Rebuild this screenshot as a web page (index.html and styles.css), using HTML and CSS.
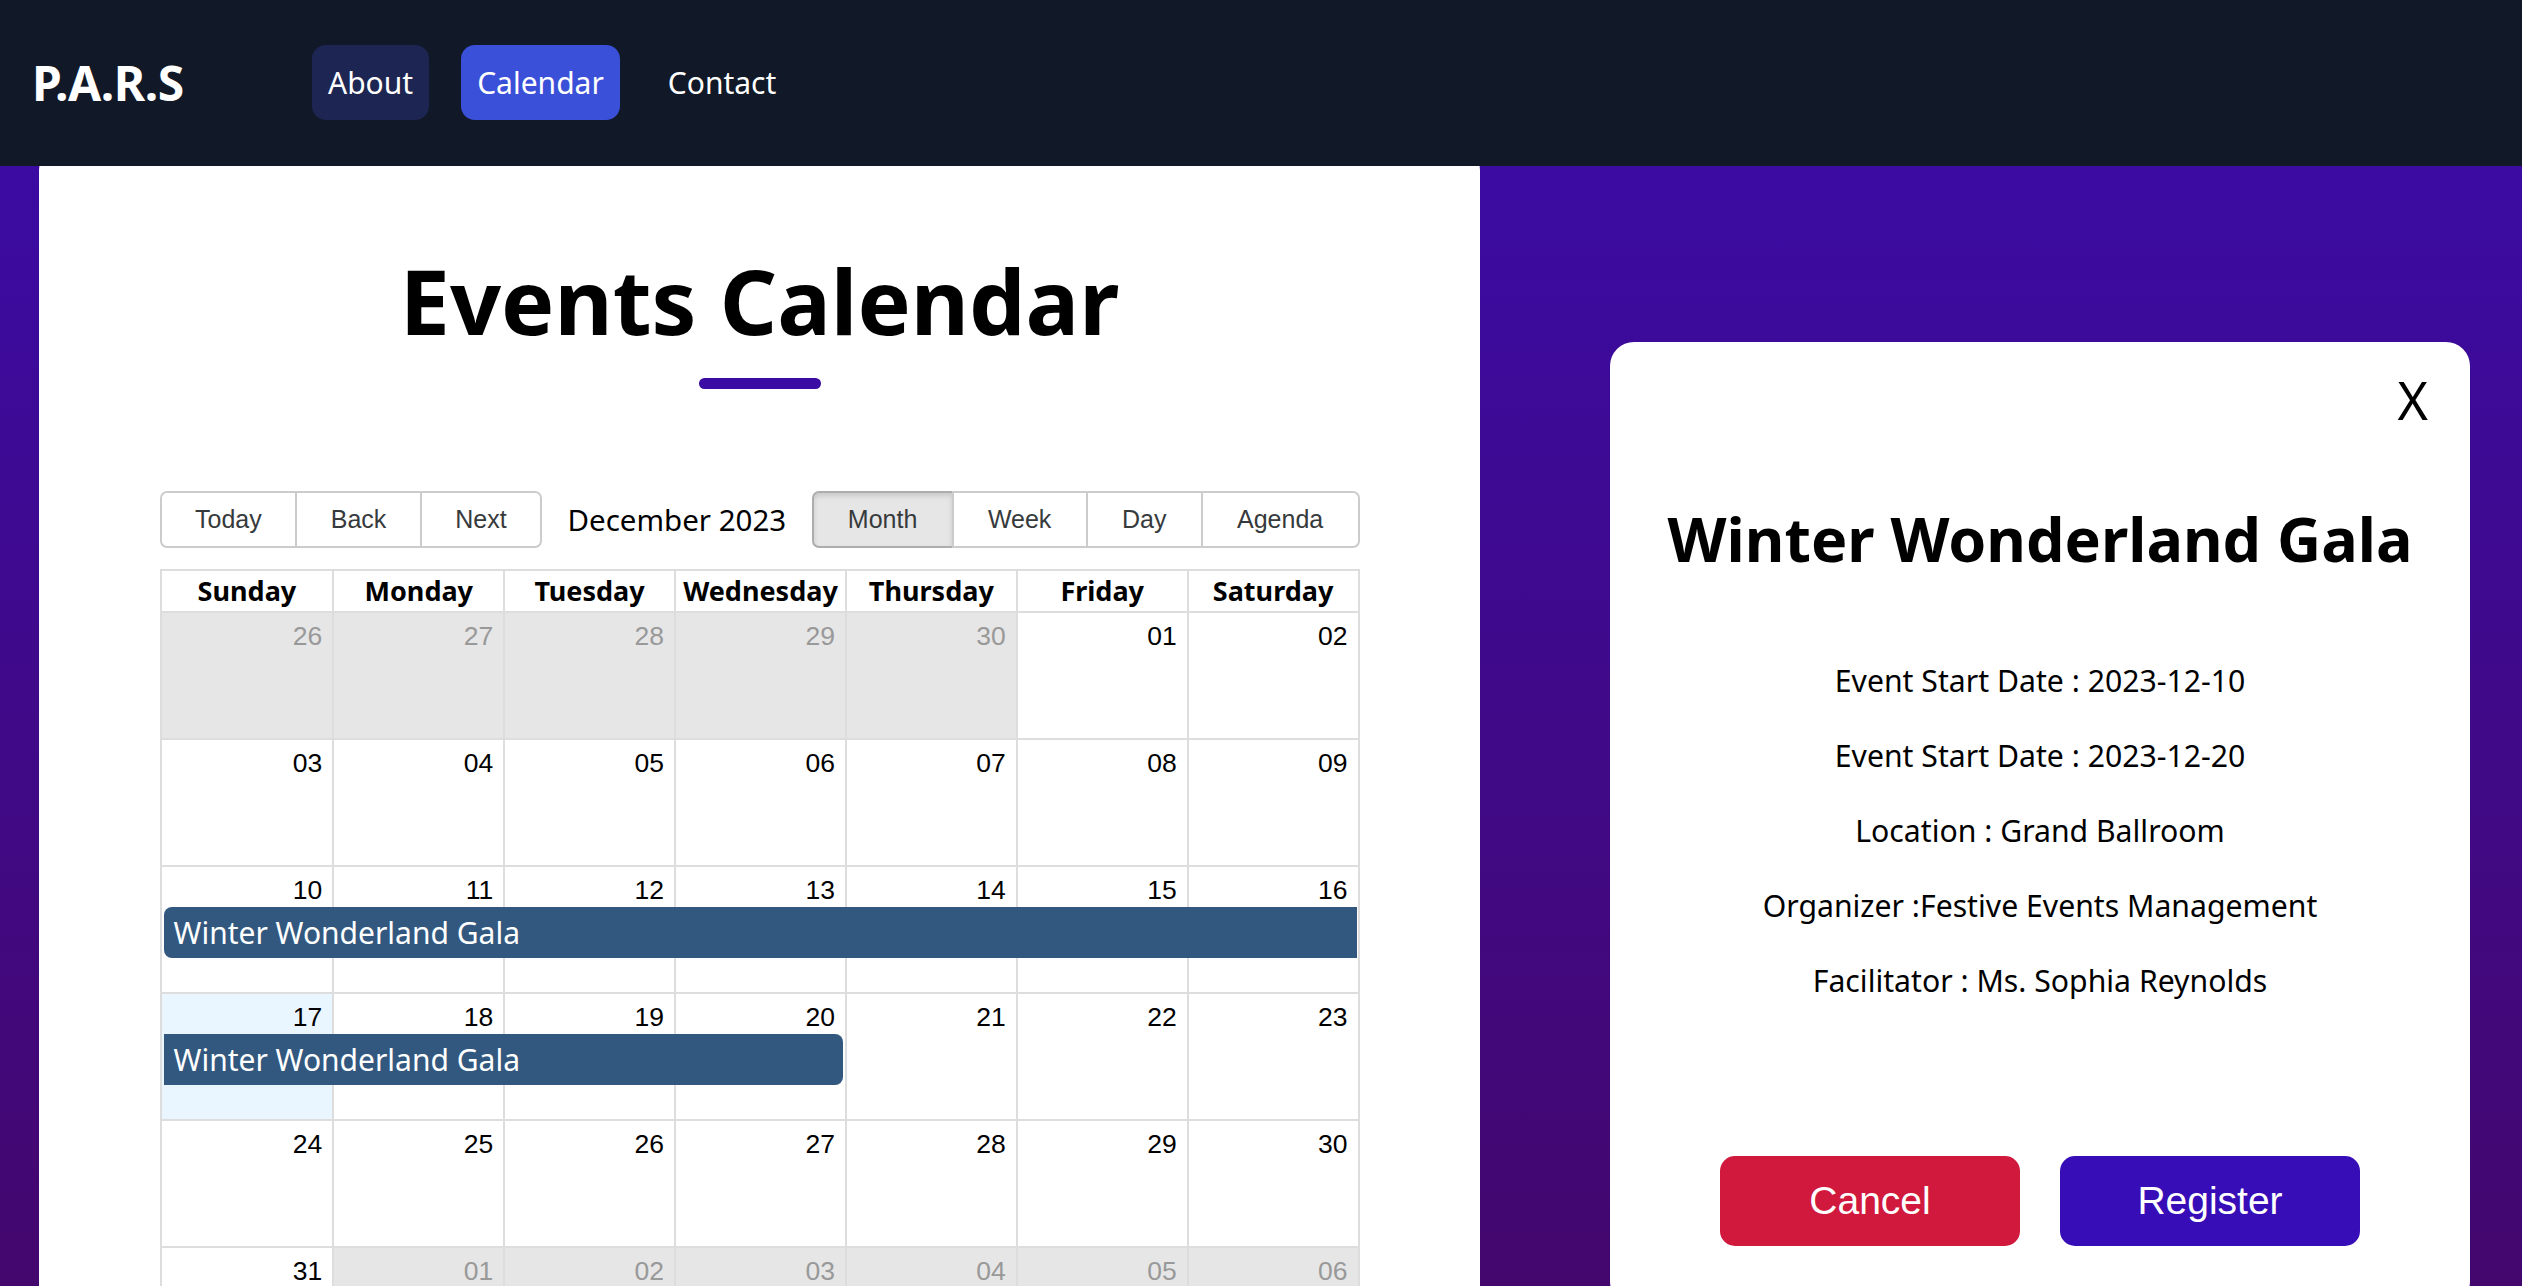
FILE: index.html
```html
<!DOCTYPE html>
<html lang="en">
<head>
<meta charset="utf-8">
<title>P.A.R.S - Events Calendar</title>
<link rel="stylesheet" href="styles.css">
</head>
<body>
<header class="navbar">
  <div class="brand">P.A.R.S</div>
  <nav class="nav">
    <a class="nav-link nav-soft">About</a>
    <a class="nav-link nav-active">Calendar</a>
    <a class="nav-link">Contact</a>
  </nav>
</header>
<main class="page">
  <section class="card">
    <h1 class="title">Events Calendar</h1>
    <div class="title-bar"></div>
    <div class="calendar">
      <div class="toolbar">
        <div class="btn-group">
          <button class="tb-btn">Today</button><button class="tb-btn">Back</button><button class="tb-btn">Next</button>
        </div>
        <span class="toolbar-label">December 2023</span>
        <div class="btn-group views">
          <button class="tb-btn active">Month</button><button class="tb-btn">Week</button><button class="tb-btn">Day</button><button class="tb-btn">Agenda</button>
        </div>
      </div>
      <div class="month">
        <div class="month-header">
          <div class="hcell">Sunday</div><div class="hcell">Monday</div><div class="hcell">Tuesday</div><div class="hcell">Wednesday</div><div class="hcell">Thursday</div><div class="hcell">Friday</div><div class="hcell">Saturday</div>
        </div>
        <div class="week">
          <div class="day off">26</div><div class="day off">27</div><div class="day off">28</div><div class="day off">29</div><div class="day off">30</div><div class="day">01</div><div class="day">02</div>
        </div>
        <div class="week">
          <div class="day">03</div><div class="day">04</div><div class="day">05</div><div class="day">06</div><div class="day">07</div><div class="day">08</div><div class="day">09</div>
        </div>
        <div class="week">
          <div class="day">10</div><div class="day">11</div><div class="day">12</div><div class="day">13</div><div class="day">14</div><div class="day">15</div><div class="day">16</div>
          <div class="event span7 continues-after">Winter Wonderland Gala</div>
        </div>
        <div class="week">
          <div class="day today">17</div><div class="day">18</div><div class="day">19</div><div class="day">20</div><div class="day">21</div><div class="day">22</div><div class="day">23</div>
          <div class="event span4 continues-prior">Winter Wonderland Gala</div>
        </div>
        <div class="week">
          <div class="day">24</div><div class="day">25</div><div class="day">26</div><div class="day">27</div><div class="day">28</div><div class="day">29</div><div class="day">30</div>
        </div>
        <div class="week">
          <div class="day">31</div><div class="day off">01</div><div class="day off">02</div><div class="day off">03</div><div class="day off">04</div><div class="day off">05</div><div class="day off">06</div>
        </div>
      </div>
    </div>
  </section>
  <aside class="modal">
    <div class="modal-close">X</div>
    <h2 class="modal-title">Winter Wonderland Gala</h2>
    <div class="modal-details">
      <p>Event Start Date : 2023-12-10</p>
      <p>Event Start Date : 2023-12-20</p>
      <p>Location : Grand Ballroom</p>
      <p>Organizer :Festive Events Management</p>
      <p>Facilitator : Ms. Sophia Reynolds</p>
    </div>
    <div class="modal-actions">
      <button class="action-btn btn-cancel">Cancel</button>
      <button class="action-btn btn-register">Register</button>
    </div>
  </aside>
</main>
</body>
</html>
```
FILE: styles.css
```css
* { box-sizing: border-box; }

html, body {
  margin: 0;
  padding: 0;
}

body {
  font-family: "Noto Sans", "Open Sans", sans-serif;
  color: #000;
  background: linear-gradient(180deg, #3a0caa 0%, #44076e 100%) fixed;
  min-height: 100vh;
}

/* ---------- Navbar ---------- */
.navbar {
  position: sticky;
  top: 0;
  z-index: 10;
  height: 166px;
  background: #111827;
  display: flex;
  align-items: center;
  padding-left: 32px;
}

.brand {
  width: 280px;
  color: #fff;
  font-weight: 700;
  font-size: 48px;
  line-height: 1;
  letter-spacing: -0.5px;
}

.nav {
  display: flex;
  align-items: center;
  gap: 32px;
  margin-top: -2px;
}

.nav-link {
  color: #fff;
  font-size: 30px;
  line-height: 43px;
  padding: 16px 16px;
  border-radius: 14px;
  text-decoration: none;
}

.nav-soft { background: #1d2552; }
.nav-active { background: #3a50d9; }

/* ---------- Layout ---------- */
.page {
  display: flex;
  align-items: flex-start;
  padding-left: 39px;
}

.card {
  width: 1441px;
  flex: none;
  margin-top: -16px;
  background: #fff;
  border-radius: 20px;
  padding: 96px 0 80px;
}

.title {
  margin: 0;
  text-align: center;
  font-size: 89.5px;
  line-height: 108px;
  font-weight: 700;
}

.title-bar {
  width: 122px;
  height: 11px;
  border-radius: 6px;
  background: #3a0ca3;
  margin: 24px auto 0;
}

/* ---------- Calendar ---------- */
.calendar {
  width: 1200px;
  margin: 102px auto 0;
}

.toolbar {
  display: flex;
  align-items: center;
  margin-bottom: 21px;
}

.btn-group {
  display: inline-flex;
}

.tb-btn {
  font-family: "Liberation Sans", Arial, sans-serif;
  font-size: 25px;
  line-height: normal;
  color: #373a3c;
  background: #fff;
  border: 2px solid #ccc;
  padding: 12px 33.5px;
  margin: 0;
  white-space: nowrap;
}

.views .tb-btn { padding-left: 34.3px; padding-right: 34.3px; }

.tb-btn + .tb-btn { margin-left: -2px; }
.tb-btn:first-child { border-radius: 7px 0 0 7px; }
.tb-btn:last-child { border-radius: 0 7px 7px 0; }

.tb-btn.active {
  background: #e6e6e6;
  border-color: #adadad;
  box-shadow: inset 0 3px 5px rgba(0, 0, 0, 0.125);
}

.toolbar-label {
  flex: 1;
  text-align: center;
  font-size: 29.5px;
  padding: 0 10px;
}

.month {
  border: 2px solid #ddd;
}

.month-header {
  display: grid;
  grid-template-columns: repeat(7, 1fr);
  height: 40px;
}

.hcell {
  text-align: center;
  font-weight: 700;
  font-size: 27px;
  line-height: 40px;
  white-space: nowrap;
  overflow: hidden;
}

.hcell + .hcell { border-left: 2px solid #ddd; }

.week {
  display: grid;
  grid-template-columns: repeat(7, 1fr);
  grid-template-rows: 40px 51px 1fr;
  height: 127px;
  border-top: 2px solid #ddd;
}

.day {
  grid-row: 1 / -1;
  text-align: right;
  padding: 8px 10px 0 0;
  font-family: "Liberation Sans", Arial, sans-serif;
  font-size: 26.5px;
  line-height: 30px;
  color: #000;
}

.day + .day { border-left: 2px solid #ddd; }

.day:nth-child(1) { grid-column: 1; }
.day:nth-child(2) { grid-column: 2; }
.day:nth-child(3) { grid-column: 3; }
.day:nth-child(4) { grid-column: 4; }
.day:nth-child(5) { grid-column: 5; }
.day:nth-child(6) { grid-column: 6; }
.day:nth-child(7) { grid-column: 7; }

.day.off {
  background: #e6e6e6;
  color: #999;
}

.day.today { background: #eaf6ff; }

.event {
  grid-row: 2;
  margin: 0 2px;
  background: #325880;
  color: #fff;
  font-size: 30px;
  line-height: 41px;
  padding: 5px 10px;
  border-radius: 8px;
  white-space: nowrap;
  overflow: hidden;
}

.span7 { grid-column: 1 / span 7; }
.span4 { grid-column: 1 / span 4; }

.continues-after { border-top-right-radius: 0; border-bottom-right-radius: 0; margin-right: 1px; }
.continues-prior { border-top-left-radius: 0; border-bottom-left-radius: 0; }

/* ---------- Modal ---------- */
.modal {
  width: 860px;
  flex: none;
  margin: 176px 0 0 130px;
  background: #fff;
  border-radius: 24px;
  padding: 32px 40px 60px;
}

.modal-close {
  text-align: right;
  font-size: 52px;
  line-height: 52px;
  font-weight: 400;
  margin-right: 2px;
}

.modal-title {
  margin: 77px 0 0;
  text-align: center;
  font-size: 61px;
  line-height: 72px;
  font-weight: 700;
}

.modal-details {
  margin-top: 68px;
  text-align: center;
}

.modal-details p {
  margin: 0;
  font-size: 30.2px;
  line-height: 75px;
}

.modal-actions {
  display: flex;
  justify-content: center;
  gap: 40px;
  margin-top: 138px;
}

.action-btn {
  width: 300px;
  height: 90px;
  border: none;
  border-radius: 15px;
  color: #fff;
  font-family: "Liberation Sans", Arial, sans-serif;
  font-size: 39px;
}

.btn-cancel { background: #d0193d; }
.btn-register { background: #370db7; }
```
